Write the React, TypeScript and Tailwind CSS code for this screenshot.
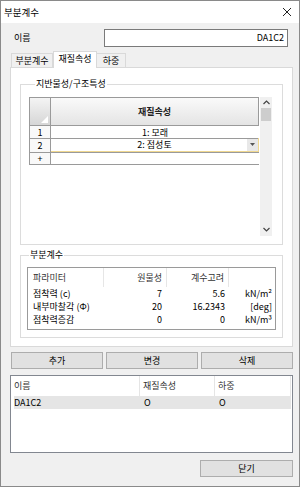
import React from "react";

const Btn = ({ label, className = "" }: { label: string; className?: string }) => (
  <div
    className={
      "h-[17px] flex items-center justify-center bg-[#e1e1e1] border border-[#adadad] text-[9px] leading-[12px] " +
      className
    }
  >
    {label}
  </div>
);

export default function App() {
  return (
    <div className="w-[300px] h-[487px] bg-[#f0f0f0] border border-[#8a8a8a] flex flex-col font-['Noto_Sans_CJK_KR',sans-serif] text-[9px] leading-[12px] text-black overflow-hidden">
      {/* title bar */}
      <div className="h-[22px] bg-white flex items-center justify-between pl-[3px] pr-[6px] shrink-0">
        <span className="text-[9.5px] leading-[12px]">부분계수</span>
        <svg width="10" height="10" viewBox="0 0 10 10" className="mr-[1px]">
          <path d="M1 1 L9 9 M9 1 L1 9" stroke="#222" strokeWidth="1" fill="none" />
        </svg>
      </div>

      <div className="flex flex-col pl-[9px] pr-[6px]">
        {/* name row */}
        <div className="mt-[6px] h-[18px] flex items-center">
          <span className="w-[94px] pl-[4px]">이름</span>
          <div className="flex-1 mr-[5px] h-[18px] bg-white border border-[#7a7a7a] flex items-center justify-end pr-[3px]">
            DA1C2
          </div>
        </div>

        {/* tabs */}
        <div className="mt-[4px] h-[16px] flex items-end pl-[1px] relative z-10">
          <div className="h-[14px] w-[42px] border border-b-0 border-[#d9d9d9] bg-[#f0f0f0] flex items-center justify-center">
            부분계수
          </div>
          <div className="h-[17px] w-[44px] border border-b-0 border-[#d9d9d9] bg-white flex items-start justify-center pt-[1px] -mb-[1px]">
            재질속성
          </div>
          <div className="h-[14px] w-[29px] border border-b-0 border-l-0 border-[#d9d9d9] bg-[#f0f0f0] flex items-center justify-center">
            하중
          </div>
        </div>

        {/* tab panel */}
        <div className="h-[280px] bg-white border border-[#d9d9d9] flex flex-col pt-[9px] px-[9px]">
          <fieldset className="border border-[#dcdcdc] px-[8px] pb-[8px] pt-[6px]">
            <legend className="ml-[6px] px-[1px] leading-[14px]">지반물성/구조특성</legend>
            <div className="h-[139px] flex">
              {/* grid */}
              <div className="w-[230px] flex flex-col border-t border-[#9a9a9a]">
                <div className="h-[27px] flex">
                  <div className="w-[22px] relative bg-gradient-to-b from-[#f4f4f4] to-[#d6d6d6] border-r border-l border-[#9a9a9a]">
                    <svg width="7" height="7" viewBox="0 0 7 7" className="absolute right-[2px] bottom-[2px]">
                      <path d="M7 0 L7 7 L0 7 Z" fill="#ffffff" />
                    </svg>
                  </div>
                  <div className="flex-1 bg-gradient-to-b from-[#fafafa] to-[#e4e4e4] border-r border-[#9a9a9a] flex items-center justify-center font-bold text-[#222]">
                    재질속성
                  </div>
                </div>
                <div className="h-[13px] flex border-t border-[#9a9a9a] leading-[11px]">
                  <div className="w-[22px] border-l border-r border-[#9a9a9a] bg-[#f9f9f9] flex items-center justify-center">
                    1
                  </div>
                  <div className="flex-1 flex items-center justify-center">1: 모래</div>
                </div>
                <div className="h-[14px] flex border-t border-[#9a9a9a] leading-[11px]">
                  <div className="w-[22px] border-l border-r border-[#9a9a9a] bg-[#f9f9f9] flex items-center justify-center">
                    2
                  </div>
                  <div className="flex-1 border border-l-0 border-t-0 border-[#f0d890] -mt-[1px] border-t-[#f0d890] flex items-center">
                    <div className="flex-1 text-center pl-[11px]">2: 점성토</div>
                    <div className="w-[11px] h-[12px] bg-[#e8e8e8] flex items-center justify-center">
                      <svg width="5" height="3" viewBox="0 0 5 3">
                        <path d="M0 0 L5 0 L2.5 3 Z" fill="#555" />
                      </svg>
                    </div>
                  </div>
                </div>
                <div className="h-[13px] flex border-t border-b border-[#9a9a9a] leading-[11px]">
                  <div className="w-[22px] border-l border-r border-[#9a9a9a] bg-[#f9f9f9] flex items-center justify-center">
                    +
                  </div>
                  <div className="flex-1" />
                </div>
              </div>
              {/* scrollbar */}
              <div className="ml-[1px] w-[12px] bg-[#f0f0f0] flex flex-col items-center">
                <div className="h-[11px] flex items-center justify-center">
                  <svg width="7" height="5" viewBox="0 0 7 5">
                    <path d="M0.5 4 L3.5 1 L6.5 4" stroke="#444" strokeWidth="1.2" fill="none" />
                  </svg>
                </div>
                <div className="w-[10px] h-[13px] bg-[#cdcdcd]" />
                <div className="flex-1" />
                <div className="h-[11px] flex items-center justify-center mb-[1px]">
                  <svg width="7" height="5" viewBox="0 0 7 5">
                    <path d="M0.5 1 L3.5 4 L6.5 1" stroke="#444" strokeWidth="1.2" fill="none" />
                  </svg>
                </div>
              </div>
            </div>
          </fieldset>

          <fieldset className="mt-[3px] border border-[#dcdcdc] pl-[6px] pr-[6px] pb-[7px] pt-[5px]">
            <legend className="ml-[2px] px-[1px] leading-[14px]">부분계수</legend>
            <div className="h-[63px] border border-[#9a9a9a] flex flex-col">
              <div className="h-[19px] flex text-[#333]">
                <div className="w-[76px] pl-[5px] flex items-center border-r border-[#e6e6e6]">파라미터</div>
                <div className="w-[63px] pr-[4px] flex items-center justify-end border-r border-[#e6e6e6]">원물성</div>
                <div className="w-[62px] pr-[4px] flex items-center justify-end border-r border-[#e6e6e6]">계수고려</div>
                <div className="flex-1" />
              </div>
              {[
                ["점착력 (c)", "7", "5.6", "kN/m²"],
                ["내부마찰각 (Φ)", "20", "16.2343", "[deg]"],
                ["점착력증감", "0", "0", "kN/m³"],
              ].map((r) => (
                <div key={r[0]} className="h-[13px] flex leading-[13px]">
                  <div className="w-[76px] pl-[5px] whitespace-nowrap">{r[0]}</div>
                  <div className="w-[63px] pr-[5px] text-right">{r[1]}</div>
                  <div className="w-[62px] pr-[4px] text-right">{r[2]}</div>
                  <div className="flex-1 pr-[3px] text-right">{r[3]}</div>
                </div>
              ))}
            </div>
          </fieldset>
        </div>

        {/* buttons */}
        <div className="mt-[5px] grid grid-cols-3 gap-[3px] pl-[1px]">
          <Btn label="추가" />
          <Btn label="변경" />
          <Btn label="삭제" />
        </div>

        {/* list */}
        <div className="mt-[6px] h-[78px] bg-white border border-[#828790] flex flex-col pl-[3px] pr-[1px]">
          <div className="h-[20px] flex text-[#333]">
            <div className="w-[126px] flex items-center border-r border-[#e5e5e5]">이름</div>
            <div className="w-[75px] pl-[3px] flex items-center border-r border-[#e5e5e5]">재질속성</div>
            <div className="flex-1 pl-[3px] flex items-center border-r border-[#e5e5e5]">하중</div>
          </div>
          <div className="h-[13px] flex bg-[#e5e5e5] leading-[13px]">
            <div className="w-[126px]">DA1C2</div>
            <div className="w-[75px] pl-[4px]">O</div>
            <div className="flex-1 pl-[4px]">O</div>
          </div>
        </div>

        {/* close */}
        <div className="mt-[7px] flex justify-end">
          <Btn label="닫기" className="w-[93px]" />
        </div>
      </div>
    </div>
  );
}
